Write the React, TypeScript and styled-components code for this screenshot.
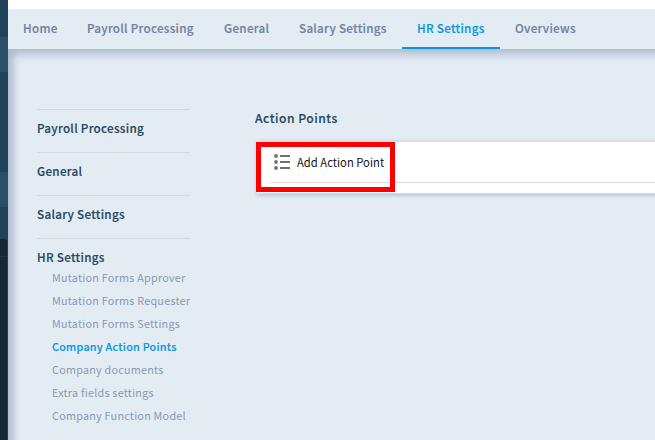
import React from 'react';
import styled, { createGlobalStyle } from 'styled-components';

const GlobalStyle = createGlobalStyle`
  * { box-sizing: border-box; }
  body {
    margin: 0;
    overflow: hidden;
    background: #fff;
    font-family: "Noto Sans CJK SC", "Noto Sans", sans-serif;
    font-size: 11.7px;
  }
`;

const Shell = styled.div`
  display: flex;
  width: 100%;
  height: 440px;
  overflow: hidden;
`;

const Rail = styled.aside`
  display: flex;
  flex-direction: column;
  flex: 0 0 8px;
  background: #20415a;
`;

const RailBlock = styled.div<{ $height: number; $active?: boolean }>`
  height: ${(p) => p.$height}px;
  background: ${(p) => (p.$active ? '#2c4f69' : '#20415a')};
`;

const RailPanel = styled.div`
  flex: 1;
  margin-right: 1px;
  padding-top: 17px;
  border-radius: 0 3px 0 0;
  background: #142936;
`;

const RailRule = styled.div`
  height: 1px;
  background: #20394a;
`;

const Page = styled.div`
  display: flex;
  flex-direction: column;
  flex: 1;
  min-width: 0;
  padding-top: 9px;
`;

const TabBar = styled.nav`
  display: flex;
  flex: 0 0 40px;
  background: #e4ecf3;
`;

const Tab = styled.a<{ $width: number; $active?: boolean }>`
  flex: 0 0 ${(p) => p.$width}px;
  height: 40px;
  padding-left: 15px;
  line-height: 38px;
  font-weight: 500;
  letter-spacing: 0.27px;
  -webkit-text-stroke: 0.15px currentColor;
  white-space: nowrap;
  color: ${(p) => (p.$active ? '#0896df' : '#7180a0')};
  border-bottom: 2px solid ${(p) => (p.$active ? '#0896df' : 'transparent')};
`;

const Content = styled.main`
  display: flex;
  flex: 1;
  min-height: 0;
  padding: 60px 0 0 29px;
  background: #e4ecf3;
  box-shadow: inset 5px 5px 10px 0 #aab8cd;
  clip-path: inset(0);
  margin-right: -20px;
  margin-bottom: -20px;
`;

const Sidebar = styled.aside`
  flex: 0 0 153px;
  min-width: 0;
`;

const Section = styled.section`
  height: 43px;
  border-top: 1px solid #d6dade;
`;

const SectionTitle = styled.h2`
  margin: 0;
  padding-top: 7px;
  font-size: 11.7px;
  font-weight: 500;
  line-height: 21px;
  letter-spacing: 0.28px;
  -webkit-text-stroke: 0.15px currentColor;
  color: #26465f;
`;

const SubMenu = styled.ul`
  margin: 0;
  padding: 0 0 0 15px;
  list-style: none;
`;

const SubItem = styled.li<{ $active?: boolean }>`
  height: 23px;
  line-height: 20px;
  font-size: 10.8px;
  letter-spacing: 0.24px;
  white-space: nowrap;
  font-weight: ${(p) => (p.$active ? 500 : 400)};
  -webkit-text-stroke: ${(p) => (p.$active ? '0.15px' : '0')} currentColor;
  color: ${(p) => (p.$active ? '#0896df' : '#8799b3')};
`;

const Main = styled.section`
  flex: 1;
  margin-left: 65px;
`;

const Heading = styled.h1`
  margin: 0 0 15px;
  font-size: 12.1px;
  font-weight: 500;
  line-height: 17px;
  letter-spacing: 0.52px;
  -webkit-text-stroke: 0.15px currentColor;
  color: #26465f;
`;

const Card = styled.div`
  position: relative;
  height: 53px;
  margin-left: 2px;
  padding: 0 0 0 13px;
  background: #fff;
  border-top: 1px solid #d5dfe7;
  border-bottom: 1px solid #d9dbdf;
  box-shadow: 0 1px 4px #a9b9ca;
`;

const ActionRow = styled.div`
  display: flex;
  align-items: center;
  height: 41px;
  padding: 0 0 0 4px;
  border-bottom: 1px solid #d9d9d9;
`;

const ActionLabel = styled.span`
  margin-left: 7px;
  font-size: 11.2px;
  line-height: 20px;
  letter-spacing: 0.03px;
  white-space: nowrap;
  color: #111;
`;

const Highlight = styled.div`
  position: absolute;
  top: 0;
  left: -1px;
  width: 139px;
  height: 50px;
  border: 5px solid #fe0000;
`;

const ListIcon = () => (
  <svg width="16" height="16" viewBox="0 0 16 16" fill="#707070">
    <circle cx="2" cy="2" r="1.9" />
    <circle cx="2" cy="8" r="1.9" />
    <circle cx="2" cy="14" r="1.9" />
    <rect x="6" y="1" width="10" height="2" />
    <rect x="6" y="7" width="10" height="2" />
    <rect x="6" y="13" width="10" height="2" />
  </svg>
);

const tabs = [
  { label: 'Home', width: 64 },
  { label: 'Payroll Processing', width: 137 },
  { label: 'General', width: 75 },
  { label: 'Salary Settings', width: 118 },
  { label: 'HR Settings', width: 98 },
  { label: 'Overviews', width: 90 },
];

const sections = ['Payroll Processing', 'General', 'Salary Settings'];

const subItems = [
  'Mutation Forms Approver',
  'Mutation Forms Requester',
  'Mutation Forms Settings',
  'Company Action Points',
  'Company documents',
  'Extra fields settings',
  'Company Function Model',
];

export default function App() {
  return (
    <>
      <GlobalStyle />
      <Shell>
        <Rail>
          <RailBlock $height={37} />
          <RailBlock $height={35} $active />
          <RailBlock $height={100} />
          <RailBlock $height={35} $active />
          <RailBlock $height={32} />
          <RailPanel>
            <RailRule />
          </RailPanel>
        </Rail>
        <Page>
          <TabBar>
            {tabs.map((t) => (
              <Tab key={t.label} $width={t.width} $active={t.label === 'HR Settings'}>
                {t.label}
              </Tab>
            ))}
          </TabBar>
          <Content>
            <Sidebar>
              {sections.map((s) => (
                <Section key={s}>
                  <SectionTitle>{s}</SectionTitle>
                </Section>
              ))}
              <Section>
                <SectionTitle>HR Settings</SectionTitle>
                <SubMenu>
                  {subItems.map((s) => (
                    <SubItem key={s} $active={s === 'Company Action Points'}>
                      {s}
                    </SubItem>
                  ))}
                </SubMenu>
              </Section>
            </Sidebar>
            <Main>
              <Heading>Action Points</Heading>
              <Card>
                <ActionRow>
                  <ListIcon />
                  <ActionLabel>Add Action Point</ActionLabel>
                </ActionRow>
                <Highlight />
              </Card>
            </Main>
          </Content>
        </Page>
      </Shell>
    </>
  );
}
